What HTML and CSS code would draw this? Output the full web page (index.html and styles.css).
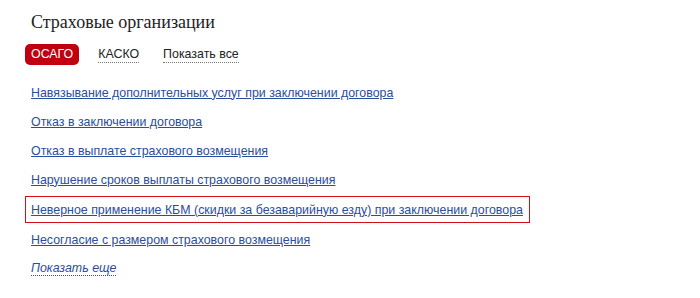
FILE: index.html
```html
<!DOCTYPE html>
<html lang="ru">
<head>
  <meta charset="UTF-8">
  <title>Страховые организации</title>
  <link rel="stylesheet" href="styles.css">
</head>
<body>
  <div class="page">
    <h1 class="title">Страховые организации</h1>

    <div class="tabs">
      <span class="tab active">ОСАГО</span>
      <span class="tab">КАСКО</span>
      <span class="tab all">Показать все</span>
    </div>

    <ul class="topics">
      <li><a href="#">Навязывание дополнительных услуг при заключении договора</a></li>
      <li><a href="#">Отказ в заключении договора</a></li>
      <li><a href="#">Отказ в выплате страхового возмещения</a></li>
      <li><a href="#">Нарушение сроков выплаты страхового возмещения</a></li>
      <li class="marked"><a href="#">Неверное применение КБМ (скидки за безаварийную езду) при заключении договора</a></li>
      <li><a href="#">Несогласие с размером страхового возмещения</a></li>
      <li><a href="#" class="more">Показать еще</a></li>
    </ul>
  </div>
</body>
</html>
```

FILE: styles.css
```css
body {
  margin: 0;
  background: #fff;
  font-family: 'Liberation Sans', Arial, sans-serif;
}

.page {
  padding: 10px 0 0 31px;
}

.title {
  margin: 0;
  font-family: 'Liberation Serif', serif;
  font-weight: normal;
  font-size: 18px;
  color: #222;
  line-height: 24px;
}

.tabs {
  display: flex;
  align-items: center;
  gap: 19px;
  margin: 10px 0 0 -6px;
}

.tab {
  font-size: 12.4px;
  color: #222;
  border-bottom: 1px dotted #777;
  line-height: 15px;
}

.tab.all {
  margin-left: 5px;
}

.tab.active {
  background: #c00010;
  color: #fff;
  border: none;
  border-radius: 5px;
  padding: 3px 6px;
}

.topics {
  list-style: none;
  margin: 13px 0 0;
  padding: 0;
}

.topics li {
  height: 29px;
  display: flex;
  align-items: center;
}

.topics a {
  font-size: 12.4px;
  color: #2a4d9c;
  text-decoration: underline;
}

.topics li.marked {
  width: fit-content;
  height: 25px;
  margin: 2px 0 2px -6px;
  padding: 0 6px 0 5px;
  border: 1px solid #d0101a;
}

.topics a.more {
  font-style: italic;
  text-decoration: none;
  border-bottom: 1px dotted #2a4d9c;
}
```
